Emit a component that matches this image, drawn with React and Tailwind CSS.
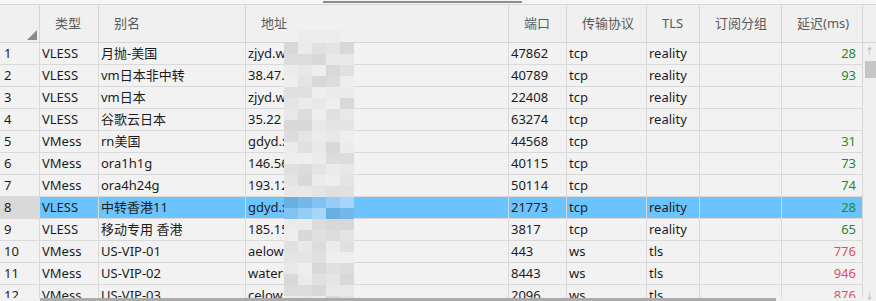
import React from "react";

const rows = [
  ["1", "VLESS", "月抛-美国", "zjyd.ww", "47862", "tcp", "reality", "", "28"],
  ["2", "VLESS", "vm日本非中转", "38.47.9", "40789", "tcp", "reality", "", "93"],
  ["3", "VLESS", "vm日本", "zjyd.w", "22408", "tcp", "reality", "", ""],
  ["4", "VLESS", "谷歌云日本", "35.22", "63274", "tcp", "reality", "", ""],
  ["5", "VMess", "rn美国", "gdyd.x", "44568", "tcp", "", "", "31"],
  ["6", "VMess", "ora1h1g", "146.56", "40115", "tcp", "", "", "73"],
  ["7", "VMess", "ora4h24g", "193.12", "50114", "tcp", "", "", "74"],
  ["8", "VLESS", "中转香港11", "gdyd.x", "21773", "tcp", "reality", "", "28"],
  ["9", "VLESS", "移动专用 香港", "185.15", "3817", "tcp", "reality", "", "65"],
  ["10", "VMess", "US-VIP-01", "aelow.", "443", "ws", "tls", "", "776"],
  ["11", "VMess", "US-VIP-02", "waterm", "8443", "ws", "tls", "", "946"],
  ["12", "VMess", "US-VIP-03", "celow.c", "2096", "ws", "tls", "", "876"],
];

const headers = ["", "类型", "别名", "地址", "端口", "传输协议", "TLS", "订阅分组", "延迟(ms)"];

const grid =
  "grid grid-cols-[40px_59px_147px_263px_58px_80px_53px_82px_81px]";

const greys = ["#e8e8e8", "#e0e0e0", "#ebebeb", "#d8d8d8", "#e4e4e4", "#eeeeee", "#dcdcdc"];
const blues = ["#6aafe2", "#74b7ea", "#82c2f2", "#96cdf6", "#a6d6fa"];

function Mosaic() {
  // pixelated cover over the address column
  const tiles = [];
  const heights = [13].concat(Array(24).fill(11));
  let y = 30;
  heights.forEach((h, r) => {
    for (let c = 0; c < 5; c++) {
      const inSel = y >= 196 && y < 218;
      let color;
      if (inSel) color = blues[(c + (y >= 207 ? 2 : 0)) % blues.length];
      else if (r === 0) color = c === 0 || c === 4 ? "transparent" : "#ececec";
      else color = greys[(r * 3 + c * 5 + ((r * c) % 3)) % greys.length];
      tiles.push(
        <div
          key={r + "-" + c}
          className="absolute"
          style={{ left: c * 14, top: y - 30, width: 14, height: h, background: color }}
        />
      );
    }
    y += h;
  });
  return (
    <div className="absolute left-[284px] top-[30px] w-[72px] h-[271px] pointer-events-none blur-[0.6px]">
      {tiles}
    </div>
  );
}

function latencyColor(v) {
  const n = parseInt(v, 10);
  if (n >= 500) return "text-[#d9545e]";
  return "text-[#1f8a2a]";
}

export default function App() {
  return (
    <div className="relative w-[876px] h-[301px] overflow-hidden bg-[#f2f2f2] text-[13px] text-[#1c1c1c] font-['Noto_Sans','Noto_Sans_CJK_SC',sans-serif]">
      <div className="h-[4px] bg-[#f5f5f5] flex">
        <div className="ml-[323px] mt-px w-[199px] h-[2px] bg-[#8c8c8c]"></div>
      </div>

      <div className="flex">
        <div className="w-[863px]">
          <div className={grid + " h-[39px] border-y border-[#d6d6d6] bg-[#f0f0f0] text-[#5a5a5a]"}>
            {headers.map((h, i) => (
              <div
                key={i}
                className={
                  "border-r border-[#d6d6d6] flex " +
                  (i === 0 ? "items-end justify-end pr-[2px] pb-[2px]" : "items-center pl-[15px]")
                }
              >
                {i === 0 ? (
                  <svg width="10" height="10" viewBox="0 0 10 10">
                    <polygon points="10,0 10,10 0,10" fill="#8a8a8a" />
                  </svg>
                ) : (
                  h
                )}
              </div>
            ))}
          </div>

          {rows.map((r) => {
            const sel = r[0] === "8";
            return (
              <div key={r[0]} className={grid + " h-[22px] border-b border-[#d9d9d9]"}>
                {r.map((v, i) => (
                  <div
                    key={i}
                    className={
                      "border-r border-[#d9d9d9] flex items-center whitespace-nowrap overflow-hidden " +
                      (i === 0 ? "pl-[4px] " : i === 8 ? "justify-end pr-[6px] " : "pl-[2px] ") +
                      (sel ? (i === 0 ? "bg-[#d9d9d9] " : "bg-[#6cc4fe] ") : "") +
                      (i === 8 ? latencyColor(v) : "")
                    }
                  >
                    {v}
                  </div>
                ))}
              </div>
            );
          })}
        </div>

        <div className="w-[13px] flex flex-col">
          <div className="h-[39px] border-y border-[#d6d6d6] bg-[#f0f0f0]"></div>
          <div className="flex-1 bg-[#f0f0f0] flex flex-col items-end">
            <div className="w-full flex justify-center pt-[4px] text-[9px] leading-[10px] text-[#b4b4b4]">↑</div>
            <div className="mt-[4px] w-[11px] h-[17px] bg-[#c6c6c6]"></div>
            <div className="flex-1"></div>
            <div className="w-full flex justify-center pb-[6px] text-[9px] leading-[10px] text-[#b4b4b4]">↓</div>
          </div>
        </div>
      </div>

      <Mosaic />

      <div className="absolute left-0 bottom-0 w-[863px] h-[3px] bg-[#f0f0f0]">
        <div className="ml-[40px] w-[736px] h-full bg-[#ababab]"></div>
      </div>
    </div>
  );
}
